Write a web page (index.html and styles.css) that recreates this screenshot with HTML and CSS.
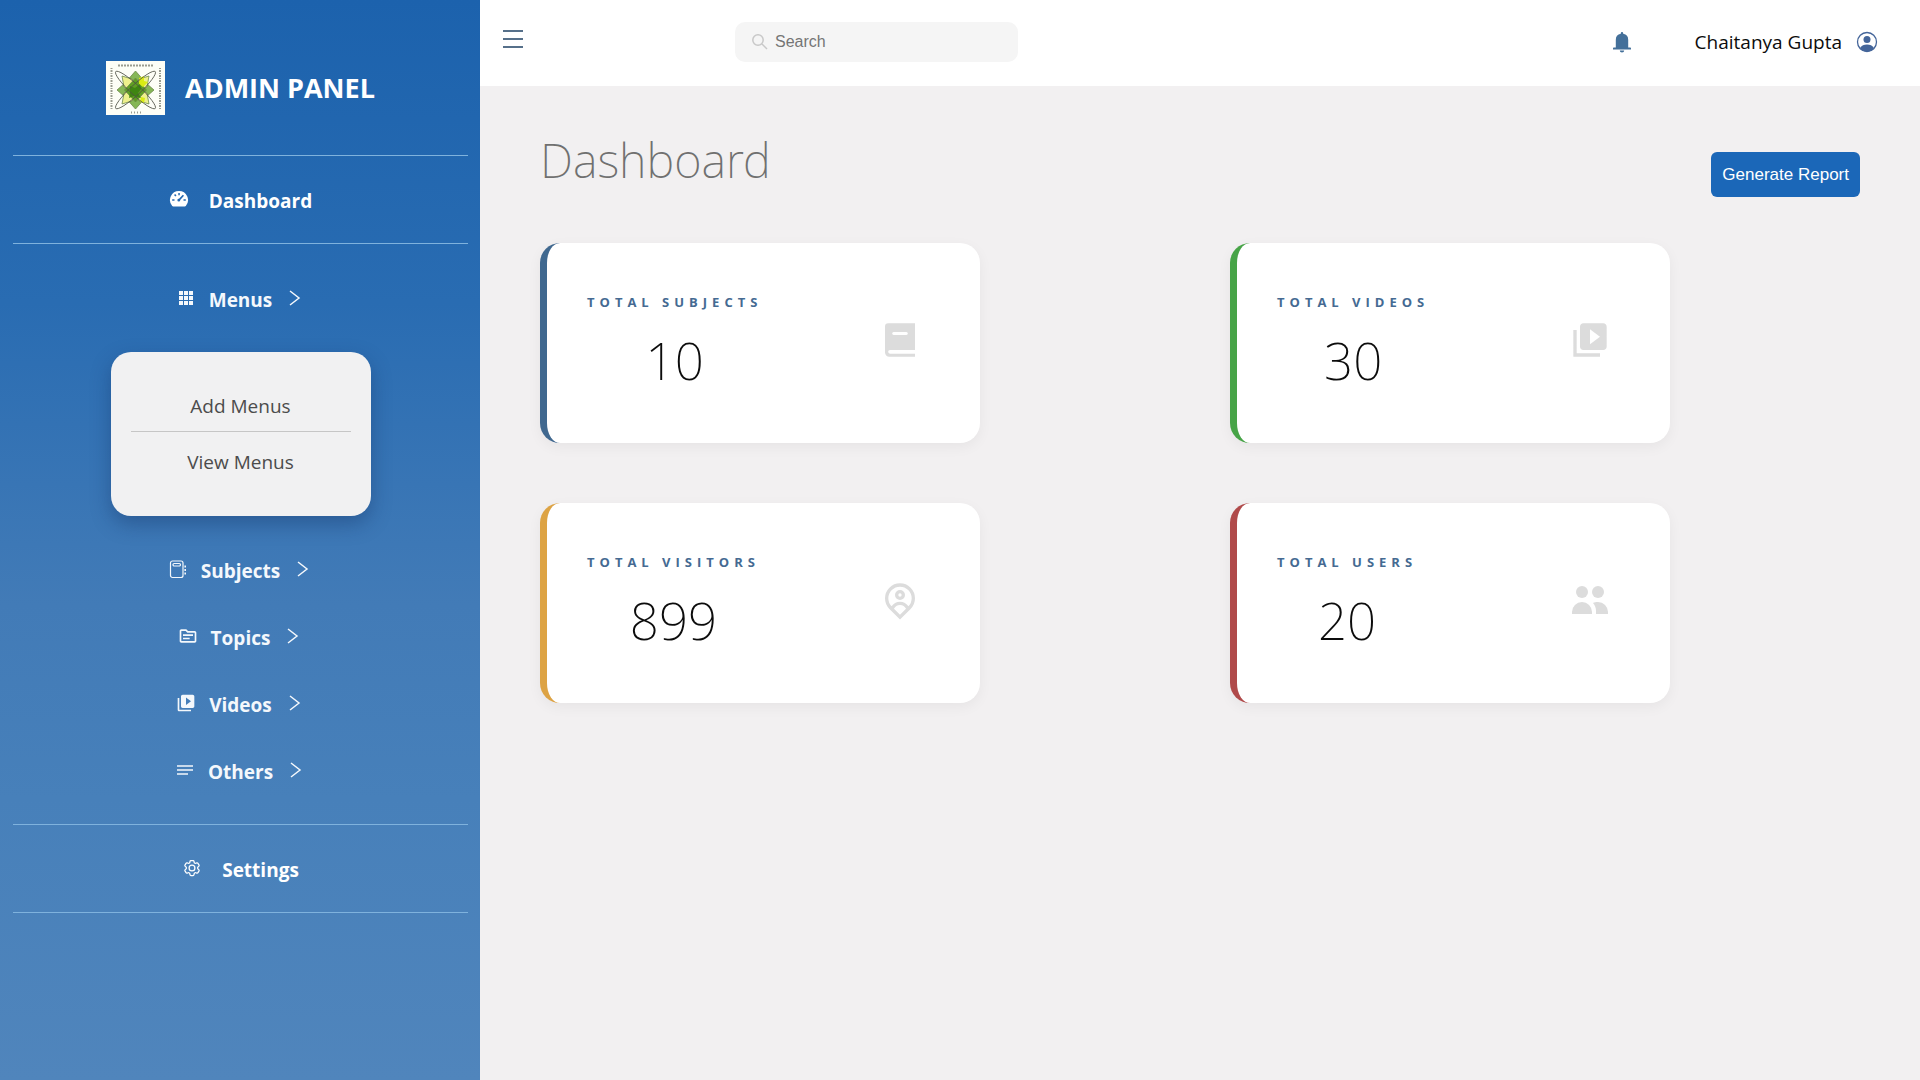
FILE: index.html
```html
<!DOCTYPE html>
<html lang="en">
<head>
<meta charset="utf-8">
<meta name="viewport" content="width=device-width, initial-scale=1">
<title>Admin Panel</title>
<link rel="stylesheet" href="styles.css">
</head>
<body>
<div class="layout">
  <aside class="sidebar">
    <div class="brand">
      <svg class="brand-logo" viewBox="0 0 59 54" role="img" aria-label="Institute emblem">
        <rect width="59" height="54" fill="#fdfef6"/>
        <g stroke="#6d8a4a" stroke-width=".8">
          <path fill="#86b756" d="M29.500 10l7 8-7 6-7-6zM29.500 34l7 6-7 8-7-8zM19 22l5 7-5 7-8-7zM40 22l8 7-8 7-5-7z"/>
          <path fill="#eef08c" d="M16 15l10 3 3 4-6 7-5-3zM43 15l-10 3-3 4 6 7 5-3zM16 43l10-3 3-4-6-7-5 3zM43 43l-10-3-3-4 6-7 5 3z"/>
          <path fill="#5f9f22" d="M29.500 17l11 12-11 12-11-12z"/>
        </g>
        <path fill="#d9ec14" d="M33 17l5-2v5l4 1-5 5-4-3zM35 36l4 1-1 5-4-1z"/>
        <path fill="#3f8512" d="M24 25l5 2 5-4 1 5-3 4 3 5-7-2-5 2 1-5z"/>
        <g fill="none" stroke="#4d5044" stroke-width=".8">
          <ellipse cx="29.500" cy="29" rx="27" ry="5" transform="rotate(43 29.500 29)"/>
          <ellipse cx="29.500" cy="29" rx="27" ry="5" transform="rotate(-43 29.500 29)"/>
        </g>
        <g fill="none" stroke="#9a9c90" stroke-width="2">
          <path stroke-dasharray="2 1" d="M12 4.500h36"/>
          <path stroke-dasharray="1 1 2 1" d="M5.500 7v41M54 7v42"/>
          <path stroke-dasharray="1 2" d="M25 51.500h10"/>
        </g>
      </svg>
      <span class="brand-name">ADMIN PANEL</span>
    </div>
    <nav class="nav" aria-label="Main">
      <a class="nav-single" href="#dashboard">
        <svg class="nav-icon" viewBox="0 0 20 20" fill="currentColor" aria-hidden="true">
          <path fill-rule="evenodd" d="M10 2a9 9 0 0 0-6.800 14.900c.3.300.6.500 1 .5h11.600c.4 0 .7-.2 1-.5A9 9 0 0 0 10 2zM9.300 4h1.500v2.200H9.300zM5 6l1.200-1 1.300 1.400-1.200 1.200zM3.200 10.200h2.300v1.500H3.200zm11.300 0h2.300v1.500h-2.300zM13.800 5.700l1.200 1.100-3.800 4.200a1.400 1.400 0 1 1-1.200-1.200z"/>
        </svg>
        <span>Dashboard</span>
      </a>
      <ul class="nav-list">
        <li>
          <button class="nav-group" type="button" aria-expanded="true">
            <svg class="nav-icon" viewBox="0 0 20 20" fill="currentColor" aria-hidden="true"><path d="M3 3h4v4H3zm5 0h4v4H8zm5 0h4v4h-4zM3 8h4v4H3zm5 0h4v4H8zm5 0h4v4h-4zM3 13h4v4H3zm5 0h4v4H8zm5 0h4v4h-4z"/></svg>
            <span>Menus</span>
            <svg class="nav-chevron" viewBox="0 0 20 20" aria-hidden="true"><path d="M5 3l9 7-9 7"/></svg>
          </button>
          <ul class="submenu">
            <li><a href="#add-menus">Add Menus</a></li>
            <li><a href="#view-menus">View Menus</a></li>
          </ul>
        </li>
        <li>
          <button class="nav-group" type="button" aria-expanded="false">
            <svg class="nav-icon" viewBox="0 0 20 20" fill="none" stroke="currentColor" stroke-width="1.200" aria-hidden="true"><rect x="2.500" y="2" width="12.500" height="16.500" rx="2"/><rect x="5" y="4.500" width="7.500" height="2.500" rx="1.200"/><path stroke-width="1.600" stroke-dasharray="2 1.500" d="M17.200 6.500v10"/></svg>
            <span>Subjects</span>
            <svg class="nav-chevron" viewBox="0 0 20 20" aria-hidden="true"><path d="M5 3l9 7-9 7"/></svg>
          </button>
        </li>
        <li>
          <button class="nav-group" type="button" aria-expanded="false">
            <svg class="nav-icon" viewBox="0 0 24 24" fill="currentColor" aria-hidden="true"><path d="M20 6h-8l-2-2H4c-1.100 0-1.990.9-1.990 2L2 18c0 1.100.9 2 2 2h16c1.100 0 2-.9 2-2V8c0-1.100-.9-2-2-2zm0 12H4V6h5.170l2 2H20v10zm-2-6H6v-2h12v2zm-4 4H6v-2h8v2z"/></svg>
            <span>Topics</span>
            <svg class="nav-chevron" viewBox="0 0 20 20" aria-hidden="true"><path d="M5 3l9 7-9 7"/></svg>
          </button>
        </li>
        <li>
          <button class="nav-group" type="button" aria-expanded="false">
            <svg class="nav-icon" viewBox="0 0 24 24" fill="currentColor" aria-hidden="true"><path d="M4 6H2v14c0 1.100.9 2 2 2h14v-2H4zm16-4H8c-1.100 0-2 .9-2 2v12c0 1.100.9 2 2 2h12c1.100 0 2-.9 2-2V4c0-1.100-.9-2-2-2zm-8 12.500v-9l6 4.500z"/></svg>
            <span>Videos</span>
            <svg class="nav-chevron" viewBox="0 0 20 20" aria-hidden="true"><path d="M5 3l9 7-9 7"/></svg>
          </button>
        </li>
        <li>
          <button class="nav-group" type="button" aria-expanded="false">
            <svg class="nav-icon" viewBox="0 0 20 20" fill="none" stroke="currentColor" stroke-width="1.600" aria-hidden="true"><path d="M2 6h16M2 10h16M2 14h11"/></svg>
            <span>Others</span>
            <svg class="nav-chevron" viewBox="0 0 20 20" aria-hidden="true"><path d="M5 3l9 7-9 7"/></svg>
          </button>
        </li>
      </ul>
      <a class="nav-single" href="#settings">
        <svg class="nav-icon" viewBox="0 0 24 24" fill="none" stroke="currentColor" stroke-width="1.500" aria-hidden="true"><path d="M9.594 3.940c.09-.542.56-.94 1.110-.94h2.593c.55 0 1.020.398 1.110.94l.213 1.281c.063.374.313.686.645.87.074.04.147.083.22.127.325.196.72.257 1.075.124l1.217-.456a1.125 1.125 0 0 1 1.370.49l1.296 2.247a1.125 1.125 0 0 1-.26 1.431l-1.003.827c-.293.241-.438.613-.43.992a7.723 7.723 0 0 1 0 .255c-.008.378.137.75.43.991l1.004.827c.424.35.534.955.26 1.430l-1.298 2.247a1.125 1.125 0 0 1-1.369.491l-1.217-.456c-.355-.133-.75-.072-1.076.124a6.470 6.470 0 0 1-.22.128c-.331.183-.581.495-.644.869l-.213 1.281c-.09.543-.56.94-1.110.94h-2.594c-.55 0-1.019-.398-1.110-.94l-.213-1.281c-.062-.374-.312-.686-.644-.87a6.520 6.520 0 0 1-.22-.127c-.325-.196-.72-.257-1.076-.124l-1.217.456a1.125 1.125 0 0 1-1.369-.49l-1.297-2.247a1.125 1.125 0 0 1 .26-1.431l1.004-.827c.292-.24.437-.613.43-.991a6.932 6.932 0 0 1 0-.255c.007-.38-.138-.751-.43-.992l-1.004-.827a1.125 1.125 0 0 1-.26-1.430l1.297-2.247a1.125 1.125 0 0 1 1.370-.491l1.216.456c.356.133.751.072 1.076-.124.072-.044.146-.086.22-.128.332-.183.582-.495.644-.869z"/><circle cx="12" cy="12" r="3.500"/></svg>
        <span>Settings</span>
      </a>
    </nav>
  </aside>

  <div class="content">
    <header class="topbar">
      <button class="icon-button menu-toggle" type="button" aria-label="Toggle menu">
        <svg class="icon-menu" viewBox="0 0 24 24" aria-hidden="true"><path d="M2 4h20M2 12h20M2 20h20"/></svg>
      </button>
      <label class="search">
        <svg class="search-icon" viewBox="0 0 18 18" aria-hidden="true"><circle cx="7" cy="7" r="5.200"/><path d="M11 11l5 5"/></svg>
        <input type="text" placeholder="Search" aria-label="Search">
      </label>
      <div class="account">
        <button class="icon-button" type="button" aria-label="Notifications">
          <svg class="icon-bell" viewBox="0 0 20 22" fill="currentColor" aria-hidden="true"><path d="M10 1a1.200 1.200 0 0 1 1.200 1.200v.6A6.200 6.200 0 0 1 16.200 9v7.500H18c.6 0 1 .4 1 1v1H1v-1c0-.6.4-1 1-1h1.800V9a6.200 6.200 0 0 1 5-6.200v-.6A1.200 1.200 0 0 1 10 1zM7.800 19.500h4.400a2.200 2 0 0 1-4.400 0z"/></svg>
        </button>
        <a class="profile" href="#profile">
          <span>Chaitanya Gupta</span>
          <svg class="icon-avatar" viewBox="0 0 22 22" fill="currentColor" aria-hidden="true"><circle cx="11" cy="11" r="9.500" fill="none" stroke="currentColor" stroke-width="1.300"/><circle cx="11" cy="8.600" r="3.500"/><path d="M4 17c1.500-2.500 4-3.500 7-3.500s5.500 1 7 3.500c-1.600 2.400-4 3.800-7 3.800S5.600 19.400 4 17z"/></svg>
        </a>
      </div>
    </header>

    <main class="main">
      <div class="page-head">
        <h1>Dashboard</h1>
        <button class="report-button" type="button">Generate Report</button>
      </div>
      <section class="cards" aria-label="Totals">
        <article class="card card-subjects">
          <div class="card-text"><h2>TOTAL SUBJECTS</h2><p>10</p></div>
          <svg class="card-icon" viewBox="0 0 24 24" fill="currentColor" aria-hidden="true"><path fill-rule="evenodd" d="M5 2h16v16H6a1 1 0 0 0 0 2.200h15V22H5.500A2.500 2.500 0 0 1 3 19.500V4a2 2 0 0 1 2-2zm3.200 5.200a.9.900 0 0 0 0 1.800h7.600a.9.900 0 0 0 0-1.800z"/></svg>
        </article>
        <article class="card card-videos">
          <div class="card-text"><h2>TOTAL VIDEOS</h2><p>30</p></div>
          <svg class="card-icon" viewBox="0 0 24 24" fill="currentColor" aria-hidden="true"><path d="M4 6H2v16h16v-2H4zm16-4H8c-1.100 0-2 .9-2 2v12c0 1.100.9 2 2 2h12c1.100 0 2-.9 2-2V4c0-1.100-.9-2-2-2zm-8 12.500v-9l6 4.500z"/></svg>
        </article>
        <article class="card card-visitors">
          <div class="card-text"><h2>TOTAL VISITORS</h2><p>899</p></div>
          <svg class="card-icon" viewBox="0 0 24 24" fill="currentColor" aria-hidden="true"><path d="M17.084 15.812a7 7 0 1 0-10.168 0A5.996 5.996 0 0 1 12 13a5.996 5.996 0 0 1 5.084 2.812zm-8.699 1.473L12 20.899l3.615-3.614a4 4 0 0 0-7.230 0zM12 23.728l-6.364-6.364a9 9 0 1 1 12.728 0zM12 10a1 1 0 1 0 0-2 1 1 0 0 0 0 2zm0 2a3 3 0 1 1 0-6 3 3 0 0 1 0 6z"/></svg>
        </article>
        <article class="card card-users">
          <div class="card-text"><h2>TOTAL USERS</h2><p>20</p></div>
          <svg class="card-icon" viewBox="0 0 40 40" fill="currentColor" aria-hidden="true"><circle cx="12" cy="12" r="6"/><circle cx="28" cy="12" r="6"/><path d="M2 34v-2a10 10 0 0 1 20 0v2zM23 23c1.500-.7 3-1 5-1a10 10 0 0 1 10 10v2H26v-3c0-3-1-6-3-8z"/></svg>
        </article>
      </section>
    </main>
  </div>
</div>
</body>
</html>
```
FILE: styles.css
```css
* { box-sizing: border-box; }

body {
  margin: 0;
  background: #f2f0f1;
  color: #0c0c0c;
  font-family: "Open Sans", "Noto Sans", sans-serif;
  font-size: 19px;
}

a { color: inherit; text-decoration: none; }
ul { list-style: none; margin: 0; padding: 0; }
button { border: 0; background: none; padding: 0; color: inherit; font: inherit; cursor: pointer; }

.layout { display: grid; grid-template-columns: 1fr 3fr; min-height: 100vh; }

.sidebar {
  padding: 0 12px 0 13px;
  background: linear-gradient(#1c62ad, #296cb2 28%, #427bb7 56%, #4780ba 74%, #5085bc);
  color: #f4f8fc;
}

.brand { display: flex; align-items: center; justify-content: center; gap: 20px; height: 155px; padding-top: 20px; }
.brand-logo { width: 59px; height: 54px; }
.brand-name { color: #fff; font-size: 27px; font-weight: 700; }

.nav { font-weight: 700; }
.nav-single {
  display: flex; align-items: center; justify-content: center; gap: 20px;
  height: 89px;
  padding-top: 2px;
  border-top: 1px solid #7fb2dd;
  border-bottom: 1px solid #7fb2dd;
  color: #fff;
}
.nav-icon, .nav-chevron { width: 20px; height: 20px; flex: none; margin-bottom: 3px; }
.nav-chevron { fill: none; stroke: currentColor; stroke-width: 1.500; }
.nav-list { padding: 22px 0 19px; }
.nav-group { display: flex; align-items: center; justify-content: center; gap: 13px; width: 100%; height: 67px; }

.submenu {
  width: 260px; max-width: 100%;
  margin: 19px auto 21px;
  padding: 29px 20px 24px;
  border-radius: 20px;
  background: #f1f1f2;
  box-shadow: 0 8px 20px rgba(20, 50, 100, .4);
  color: #4c4c4c;
  font-weight: 400;
  text-align: center;
}
.submenu a { display: block; line-height: 50px; }
.submenu li + li { padding: 5px 0; border-top: 1px solid #c6c6c6; }

.topbar { display: flex; align-items: center; height: 86px; padding: 0 42px 3px 21px; background: #fff; }
.icon-button { display: flex; color: #44709a; }
.menu-toggle { margin-bottom: 6px; }
.icon-menu { width: 24px; height: 24px; fill: none; stroke: #56708a; stroke-width: 2; }
.search { display: flex; align-items: center; gap: 6px; width: 283px; height: 40px; margin-left: 210px; padding: 0 16px; border-radius: 10px; background: #f5f5f5; }
.search-icon { width: 18px; height: 18px; flex: none; fill: none; stroke: #c8c8c8; stroke-width: 1.500; }
.search input { flex: 1; min-width: 0; border: 0; padding: 0; background: none; outline: 0; font: 16px "Liberation Sans", Arial, sans-serif; }
.search input::placeholder { color: #757575; }
.account { display: flex; align-items: center; gap: 63px; margin-left: auto; }
.icon-bell { width: 20px; height: 22px; }
.profile { display: flex; align-items: center; gap: 14px; }
.icon-avatar { width: 22px; height: 22px; color: #44659a; }

.main { padding: 38px 0 60px 60px; }
.page-head { display: flex; justify-content: space-between; align-items: center; height: 73px; padding-right: 60px; }
h1 { margin: 0; color: #707070; font-family: "Noto Sans", "Open Sans", sans-serif; font-size: 47px; font-weight: 200; line-height: 73px; }
.report-button { align-self: flex-end; height: 45px; padding: 0 11px; border-radius: 6px; background: #1b67b8; color: #fff; font: 17px "Liberation Sans", Arial, sans-serif; }

.cards { display: grid; grid-template-columns: 1fr 1fr; gap: 60px 0; margin-top: 46px; }
.card {
  display: flex; align-items: center; justify-content: space-between;
  width: 440px; max-width: 100%; min-height: 200px;
  padding: 0 60px 0 40px;
  border-left: 7px solid;
  border-radius: 20px;
  background: #fff;
  box-shadow: 0 4px 14px rgba(0, 0, 0, .05);
}
.card-subjects { border-color: #40688f; }
.card-videos { border-color: #47a447; }
.card-visitors { border-color: #dda344; }
.card-users { border-color: #b04a4a; }
.card-text { padding-top: 6px; color: #0c0c0c; text-align: center; }
.card h2 { margin: 0; color: #456a92; font-size: 13px; font-weight: 700; letter-spacing: 5px; line-height: 20px; }
.card p { margin: 8px 0 0; font-family: "Noto Sans", "Open Sans", sans-serif; font-size: 51px; font-weight: 200; line-height: 80px; }
.card-icon { width: 40px; height: 40px; margin-bottom: 6px; color: #dcdcdc; }
```
